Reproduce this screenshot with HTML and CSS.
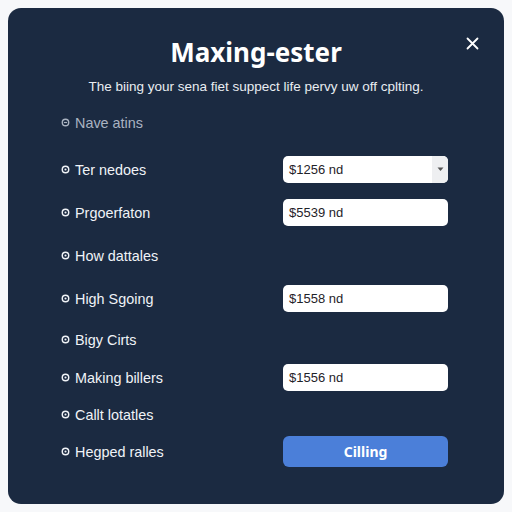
FILE: index.html
```html
<!DOCTYPE html>
<html>
<head>
<meta charset="utf-8">
<link rel="stylesheet" href="styles.css">
</head>
<body>
<div class="card">
  <button class="close" aria-label="Close">
    <svg width="13" height="13" viewBox="0 0 13 13"><path d="M1.5 1.5 L11.5 11.5 M11.5 1.5 L1.5 11.5" stroke="#ffffff" stroke-width="1.8" stroke-linecap="round"/></svg>
  </button>
  <h1 class="title">Maxing-ester</h1>
  <p class="subtitle">The biing your sena fiet suppect life pervy uw off cplting.</p>

  <div class="rows">
    <div class="row row-first">
      <span class="label dim"><svg class="ico" viewBox="0 0 10 10"><circle cx="5" cy="5" r="3.6" fill="none" stroke="currentColor" stroke-width="1.5"/><path d="M3.2 5 H6.8" stroke="currentColor" stroke-width="1.3"/></svg>Nave atins</span>
    </div>
    <div class="row">
      <span class="label"><svg class="ico" viewBox="0 0 10 10"><circle cx="5" cy="5" r="3.6" fill="none" stroke="currentColor" stroke-width="1.6"/><circle cx="5" cy="5" r="1.2" fill="currentColor"/></svg>Ter nedoes</span>
      <div class="field select"><span class="val">$1256 nd</span><span class="caret"><svg width="7" height="5" viewBox="0 0 7 5"><path d="M0.5 0.5 L3.5 4 L6.5 0.5Z" fill="#555"/></svg></span></div>
    </div>
    <div class="row">
      <span class="label"><svg class="ico" viewBox="0 0 10 10"><circle cx="5" cy="5" r="3.6" fill="none" stroke="currentColor" stroke-width="1.6"/><circle cx="5" cy="5" r="1.2" fill="currentColor"/></svg>Prgoerfaton</span>
      <div class="field"><span class="val">$5539 nd</span></div>
    </div>
    <div class="row">
      <span class="label"><svg class="ico" viewBox="0 0 10 10"><circle cx="5" cy="5" r="3.6" fill="none" stroke="currentColor" stroke-width="1.6"/><circle cx="5" cy="5" r="1.2" fill="currentColor"/></svg>How dattales</span>
    </div>
    <div class="row">
      <span class="label"><svg class="ico" viewBox="0 0 10 10"><circle cx="5" cy="5" r="3.6" fill="none" stroke="currentColor" stroke-width="1.6"/><circle cx="5" cy="5" r="1.2" fill="currentColor"/></svg>High Sgoing</span>
      <div class="field"><span class="val">$1558 nd</span></div>
    </div>
    <div class="row row-m">
      <span class="label"><svg class="ico" viewBox="0 0 10 10"><circle cx="5" cy="5" r="3.6" fill="none" stroke="currentColor" stroke-width="1.6"/><circle cx="5" cy="5" r="1.2" fill="currentColor"/></svg>Bigy Cirts</span>
    </div>
    <div class="row row-s">
      <span class="label"><svg class="ico" viewBox="0 0 10 10"><circle cx="5" cy="5" r="3.6" fill="none" stroke="currentColor" stroke-width="1.6"/><circle cx="5" cy="5" r="1.2" fill="currentColor"/></svg>Making billers</span>
      <div class="field"><span class="val">$1556 nd</span></div>
    </div>
    <div class="row row-s">
      <span class="label"><svg class="ico" viewBox="0 0 10 10"><circle cx="5" cy="5" r="3.6" fill="none" stroke="currentColor" stroke-width="1.6"/><circle cx="5" cy="5" r="1.2" fill="currentColor"/></svg>Callt lotatles</span>
    </div>
    <div class="row row-s">
      <span class="label"><svg class="ico" viewBox="0 0 10 10"><circle cx="5" cy="5" r="3.6" fill="none" stroke="currentColor" stroke-width="1.6"/><circle cx="5" cy="5" r="1.2" fill="currentColor"/></svg>Hegped ralles</span>
      <button class="btn">Cilling</button>
    </div>
  </div>
</div>
</body>
</html>
```

FILE: styles.css
```css
html, body {
  margin: 0;
  padding: 0;
  background: #f7f8fa;
}
body {
  padding: 8px;
  font-family: "Noto Sans", "Open Sans", sans-serif;
}
.card {
  position: relative;
  box-sizing: border-box;
  width: 496px;
  height: 496px;
  background: #1b2a41;
  border-radius: 13px;
  padding: 26px 0 0 0;
  color: #eef1f5;
}
.close {
  position: absolute;
  top: 27px;
  right: 24px;
  width: 16px;
  height: 16px;
  padding: 0;
  border: 0;
  background: transparent;
  display: flex;
  align-items: center;
  justify-content: center;
}
.title {
  margin: 0;
  text-align: center;
  font-size: 26px;
  line-height: 36px;
  font-weight: 700;
  color: #ffffff;
}
.subtitle {
  margin: 8px 0 0 0;
  text-align: center;
  font-family: "Liberation Sans", Arial, sans-serif;
  font-size: 13.5px;
  line-height: 18px;
  color: #e9edf2;
}
.rows {
  margin-top: 5px;
  padding: 0 56px 0 53px;
}
.row {
  display: flex;
  align-items: center;
  justify-content: space-between;
  height: 43px;
}
.row-first {
  height: 43px;
  margin-bottom: 4px;
}
.row-m { height: 39px; }
.row-s { height: 37px; }
.label {
  display: flex;
  align-items: center;
  font-family: "Liberation Sans", Arial, sans-serif;
  font-size: 14.4px;
  color: #f0f3f7;
}
.label.dim {
  color: #aab3c1;
}
.ico {
  width: 9px;
  height: 9px;
  margin-right: 5px;
  flex: none;
}
.field {
  box-sizing: border-box;
  width: 165px;
  height: 27px;
  background: #ffffff;
  border-radius: 5px;
  display: flex;
  align-items: center;
  padding-left: 6px;
  font-family: "Liberation Sans", Arial, sans-serif;
  font-size: 13px;
  color: #1f2329;
  overflow: hidden;
}
.field .val {
  flex: 1;
}
.select .caret {
  width: 16px;
  height: 100%;
  background: #eeeff1;
  display: flex;
  align-items: center;
  justify-content: center;
}
.btn {
  width: 165px;
  height: 31px;
  border: 0;
  border-radius: 6px;
  background: #4b7fd9;
  color: #ffffff;
  font-family: "Noto Sans", "Open Sans", sans-serif;
  font-weight: 700;
  font-size: 14px;
  padding: 0;
}
```
